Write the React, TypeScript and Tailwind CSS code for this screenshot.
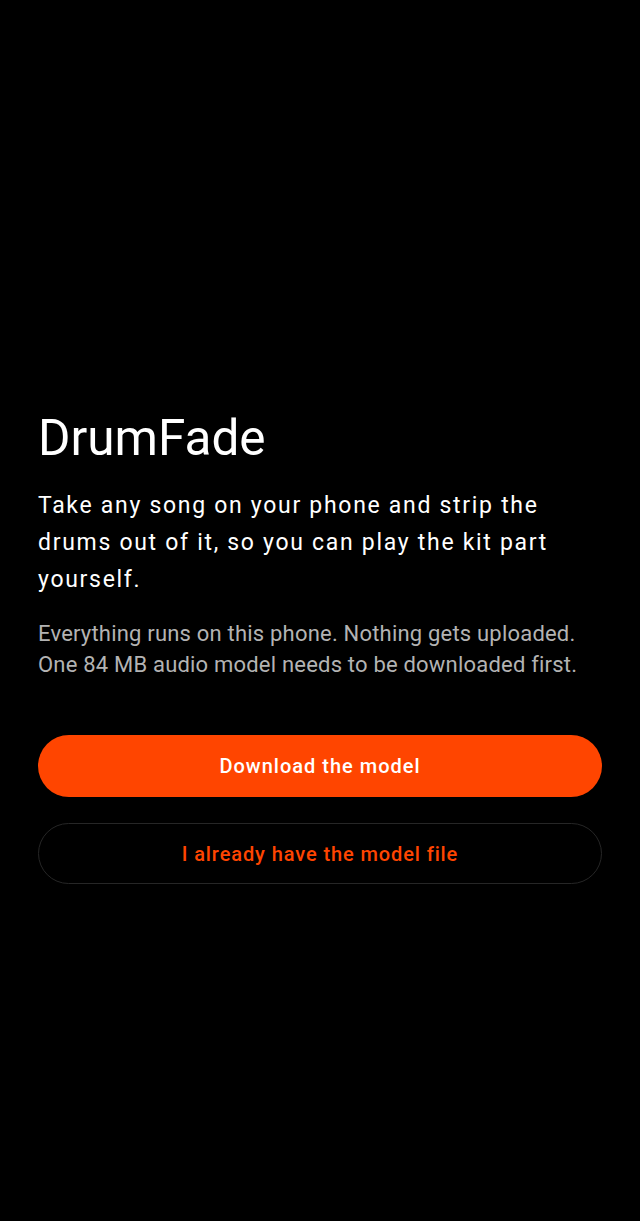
const App = () => {
  return (
    <div
      className="flex min-h-[1221px] w-full flex-col bg-black px-[38px] pt-[408px]"
      style={{ fontFamily: 'Roboto, "Noto Sans", sans-serif' }}
    >
      <h1 className="text-[49.5px] leading-[60px] font-normal text-white">DrumFade</h1>
      <p className="mt-[19px] text-[23px] leading-[37px] tracking-[1.7px] text-white">
        Take any song on your phone and strip the drums out of it, so you can play the kit part
        yourself.
      </p>
      <p className="mt-[20px] text-[22px] leading-[31px] tracking-[0.2px] text-[#b3b3b3]">
        Everything runs on this phone. Nothing gets uploaded. One 84 MB audio model needs to be
        downloaded first.
      </p>
      <div className="mt-[55px] flex flex-col gap-[26px]">
        <button className="h-[62px] w-full rounded-full bg-[#ff4500] text-[20px] font-medium tracking-[1px] text-white">
          Download the model
        </button>
        <button className="h-[61px] w-full rounded-full border border-[#262626] text-[20px] font-medium tracking-[0.9px] text-[#ff4500]">
          I already have the model file
        </button>
      </div>
    </div>
  )
}

export default App
